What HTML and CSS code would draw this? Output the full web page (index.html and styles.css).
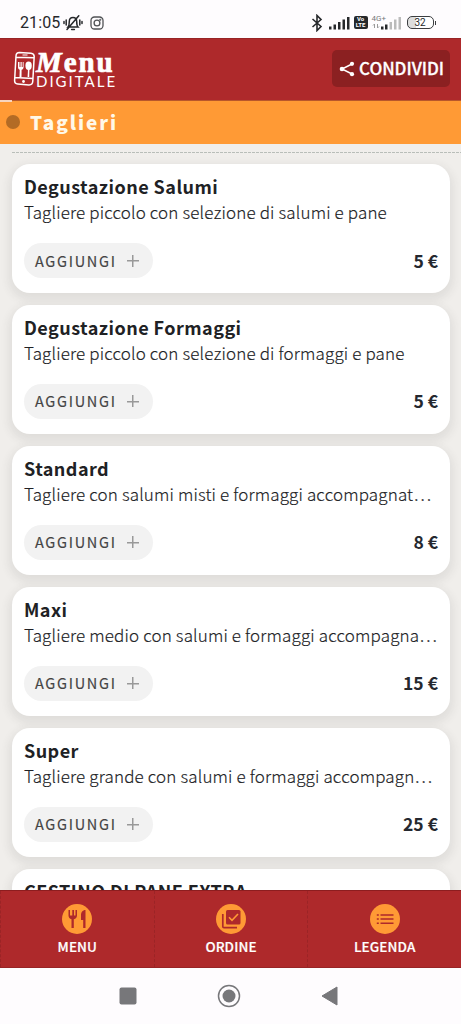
FILE: index.html
```html
<!DOCTYPE html>
<html lang="it">
<head>
<meta charset="utf-8">
<title>Menu Digitale</title>
<link rel="stylesheet" href="styles.css">
</head>
<body>
<div class="phone">
  <div class="status">
    <span class="clock">21:05</span>
    <svg class="bell" width="20" height="18" viewBox="0 0 20 18" fill="none" stroke="#26282b" stroke-width="1.5" stroke-linecap="round"><path d="M5 13h10c-1.300-1.300-1.300-2.500-1.300-5.500 0-2.200-1.500-4-3.700-4S6.300 5.300 6.300 7.500c0 3 0 4.200-1.300 5.500zM8.600 15.600h2.800M15.800 1.800 4 15.500M3.200 6v5M16.800 6v5M1 7.500v2M19 7.500v2"/></svg>
    <svg class="insta" width="14" height="14" viewBox="0 0 14 14" fill="none" stroke="#505255" stroke-width="1.300"><rect x="1" y="1" width="12" height="12" rx="3.500"/><circle cx="7" cy="7" r="2.900"/><circle cx="10.300" cy="3.700" r=".4"/></svg>
    <span class="grow"></span>
    <svg class="bt" width="12" height="18" viewBox="0 0 12 18" fill="none" stroke="#26282b" stroke-width="1.600"><path d="m1.500 5 8.500 7.500L6 16.500v-15L10 5.500 1.500 13"/></svg>
    <svg class="signal" width="21" height="14" viewBox="0 0 21 14" fill="#26282b"><rect y="10.500" width="2.500" height="3"/><rect x="4.500" y="8.500" width="2.500" height="5"/><rect x="9" y="6" width="2.500" height="7.500"/><rect x="13.500" y="3.500" width="2.500" height="10"/><rect x="18" y="1" width="2.500" height="12.500"/></svg>
    <span class="volte"><span>Vo</span><span>LTE</span></span>
    <span class="net">
      <span class="gen">4G+</span>
      <svg width="29" height="14" viewBox="0 0 29 14"><path d="M2.500 12V8L1 9.500M5.500 8v4L7 10.500" fill="none" stroke="#999" /><g fill="#26282b"><rect x="9" y="10.500" width="2.500" height="3"/><rect x="13" y="8.500" width="2.500" height="5"/></g><g fill="#bbb"><rect x="17.500" y="6" width="2.500" height="7.500"/><rect x="22" y="3.500" width="2.500" height="10"/><rect x="26.500" y="1" width="2.500" height="12.500"/></g></svg>
    </span>
    <span class="battery">32</span><span class="cap"></span>
  </div>

  <header class="header">
    <svg class="logo-icon" width="24" height="36" viewBox="0 0 24 36"><g fill="none" stroke="#fff" stroke-width="1.500"><path d="M6.500 1.500 18 2.200c2 .2 3.200 1.300 3.200 3.300L19.800 30c-.1 2.500-1.400 4-4 3.900L4.800 33c-2-.2-3.300-1.300-3.200-3.500L3 5c.1-2.200 1.400-3.500 3.500-3.500zM2.600 6.300l18.400.4M2 26.500l18 1"/></g><path d="M9.500 3.500h5v1h-5zM5 11v5c0 1.800 1 2.600 1.700 2.800L6.500 26h2l.1-7.200c1.300-.4 2-1.300 2-2.800v-5H9.700v5h-1v-5H7.500v5h-1v-5z" fill="#fff"/><ellipse cx="15.600" cy="14.800" rx="3.200" ry="4.200" fill="#fff"/><path d="M15 18h1.400l-.2 8h-1.600z" fill="#fff"/><circle cx="10.500" cy="30.500" r="1.400" fill="#fff"/></svg>
    <div class="wordmark"><span class="menu-word"><i>M</i>enu</span><span class="digital-word">DIGITALE</span></div>
    <button class="share"><svg width="16" height="16" viewBox="0 0 16 16"><path d="M13 3 3 8l10 5" fill="none" stroke="#fff" stroke-width="1.500"/><g fill="#fff"><circle cx="13" cy="2.800" r="2.100"/><circle cx="3" cy="8" r="2.300"/><circle cx="13" cy="13.200" r="2.100"/></g></svg><span>CONDIVIDI</span></button>
  </header>
  <div class="category"><span class="dot"></span><h1>Taglieri</h1></div>

  <main class="list">
    <article class="card"><h2>Degustazione Salumi</h2><p>Tagliere piccolo con selezione di salumi e pane</p><div class="row"><button class="add"><span>AGGIUNGI</span><i class="plus"></i></button><b class="price">5 €</b></div></article>
    <article class="card"><h2>Degustazione Formaggi</h2><p>Tagliere piccolo con selezione di formaggi e pane</p><div class="row"><button class="add"><span>AGGIUNGI</span><i class="plus"></i></button><b class="price">5 €</b></div></article>
    <article class="card"><h2>Standard</h2><p>Tagliere con salumi misti e formaggi accompagnat…</p><div class="row"><button class="add"><span>AGGIUNGI</span><i class="plus"></i></button><b class="price">8 €</b></div></article>
    <article class="card"><h2>Maxi</h2><p>Tagliere medio con salumi e formaggi accompagna…</p><div class="row"><button class="add"><span>AGGIUNGI</span><i class="plus"></i></button><b class="price">15 €</b></div></article>
    <article class="card"><h2>Super</h2><p>Tagliere grande con salumi e formaggi accompagn…</p><div class="row"><button class="add"><span>AGGIUNGI</span><i class="plus"></i></button><b class="price">25 €</b></div></article>
    <article class="card"><h2>CESTINO DI PANE EXTRA</h2></article>
  </main>

  <nav class="tabs">
    <a class="tab"><svg width="30" height="30" viewBox="0 0 30 30"><circle cx="15" cy="15" r="15" fill="#ff9a35"/><path d="M6.500 6v5.500c0 2 1.300 3.300 3 3.700V24h2.300v-8.800c2-.4 3.200-1.700 3.200-3.700V6h-1.500v5.500H12V6h-1.700v5.500H8V6zM23.500 6c-3 0-4.500 2.500-4.500 5v5h2.200v8h2.300z" fill="#ae292b"/></svg><span>MENU</span></a>
    <a class="tab"><svg width="30" height="30" viewBox="0 0 30 30"><circle cx="15" cy="15" r="15" fill="#ff9a35"/><rect x="10" y="6" width="14.500" height="14.500" rx="1.500" fill="#ae292b"/><path d="M6.800 10v12.500c0 .8.400 1.200 1.200 1.200h13" fill="none" stroke="#ae292b" stroke-width="1.700"/><path d="m13 13.300 3 3 6-6.300" fill="none" stroke="#ff9a35" stroke-width="1.600"/></svg><span>ORDINE</span></a>
    <a class="tab"><svg width="30" height="30" viewBox="0 0 30 30"><circle cx="15" cy="15" r="15" fill="#ff9a35"/><path d="M10.500 11h13M10.500 15h13M10.500 19.200h13M6.800 11h2M6.800 15h2M6.800 19.200h2" stroke="#ae292b" stroke-width="1.600"/></svg><span>LEGENDA</span></a>
  </nav>
  <div class="system">
    <svg width="18" height="18"><rect x=".5" y=".5" width="17" height="17" rx="2" fill="#77777a"/></svg>
    <svg width="24" height="24" fill="none"><circle cx="12" cy="12" r="10.500" stroke="#77777a" stroke-width="1.500"/><circle cx="12" cy="12" r="6.500" fill="#77777a"/></svg>
    <svg width="18" height="20"><path d="M16 1v18L1 10z" fill="#77777a" stroke="#77777a" stroke-linejoin="round"/></svg>
  </div>
</div>
</body>
</html>
```
FILE: styles.css
```css
* { box-sizing: border-box; }
body { margin: 0; background: #fefcfe; font-family: "Noto Sans CJK SC", "Open Sans", sans-serif; }
h1, h2, p { margin: 0; }
button { border: 0; font-family: inherit; margin: 0; padding: 0; }
.phone { width: 461px; height: 1024px; display: flex; flex-direction: column; overflow: hidden; background: #f0eeeb; }

.status { height: 38px; flex: none; display: flex; align-items: center; background: #fefcfe; padding: 7px 25px 0 20px; color: #26282b; }
.clock { font: 16px/20px Roboto, sans-serif; letter-spacing: .1px; width: 43px; }
.insta { margin-left: 7px; }
.grow { flex: 1; }
.bt { margin-right: 6px; }
.volte { width: 14px; height: 13px; margin-left: 4px; border-radius: 2px; background: #26282b; color: #fff; font: bold 6px/6px Roboto, sans-serif; display: flex; flex-direction: column; align-items: center; }
.net { display: flex; height: 14px; width: 29px; margin: 0 6px 0 4px; position: relative; }
.gen { position: absolute; left: 0; top: -2px; font: 8px/9px Roboto, sans-serif; color: #77797c; }
.battery { width: 27px; height: 12.500px; border: 1.500px solid #3b3d40; border-radius: 5px; background: linear-gradient(90deg, #ddd 32%, #fff 32%); font: 10px/11px Roboto, sans-serif; text-align: center; }
.cap { width: 1.500px; height: 4px; background: #3b3d40; margin-left: 1px; }

.header { height: 62px; flex: none; background: #ae292b; border-top: 1px solid #982426; display: flex; padding: 11px 11px 0 13px; color: #fff; }
.logo-icon { margin-top: 1px; }
.wordmark { display: flex; flex-direction: column; margin-left: -1px; }
.menu-word { font: bold 29px/24px "Liberation Serif", serif; letter-spacing: 1.900px; height: 23px; color: #fff; -webkit-text-stroke: .7px #fff; }
.digital-word { font: 400 15px/15px Lato, sans-serif; letter-spacing: 2px; margin-top: .5px; }
.share { margin-left: auto; width: 118px; height: 37px; border-radius: 5px; background: #8b2021; color: #fff; display: flex; align-items: center; justify-content: center; gap: 4px; font-size: 17px; font-weight: 500; line-height: 24px; }
.share svg { margin-left: 1px; }
.share span { margin-top: -2px; letter-spacing: -.05px; -webkit-text-stroke: .3px #fff; }

.category { height: 44px; flex: none; background: linear-gradient(#f7d5bf, #f7d5bf) 0 0 / 12px 2px no-repeat, linear-gradient(#b8572b, #b8572b) 0 0 / 100% 1px no-repeat, #ff9a35; display: flex; align-items: center; padding-left: 6px; }
.dot { width: 14px; height: 14px; border-radius: 50%; background: #b36b25; margin-top: -1px; }
.category h1 { margin-left: 10px; font-size: 19px; line-height: 30px; font-weight: 900; letter-spacing: 1.900px; color: #fff8e8; }

.list { flex: 1; min-height: 0; overflow: hidden; margin-top: 8px; padding: 0 11px 0 12px; display: flex; flex-direction: column; gap: 11.600px; }
.list::before { content: ""; flex: none; height: 1px; margin: 0 -11px -.600px 0; background: repeating-linear-gradient(90deg, #b9beb9 0 3px, transparent 3px 4px); }
.card { flex: none; height: 129.400px; border-radius: 18px; background: #fff; padding: 9px 12px 0; box-shadow: 0 4px 10px 3px rgba(60, 55, 50, .09); }
.card h2 { font-size: 18px; line-height: 26px; font-weight: 700; letter-spacing: .460px; color: #202124; white-space: nowrap; }
.card p { font-size: 17px; line-height: 26px; font-weight: 300; letter-spacing: .150px; color: #202124; white-space: nowrap; -webkit-text-stroke: .15px #202124; }
.row { display: flex; align-items: center; justify-content: space-between; margin-top: 18px; height: 35px; }
.add { width: 129px; height: 35px; border-radius: 18px; background: #f2f2f2; display: flex; align-items: center; padding-left: 11px; font-size: 14.500px; line-height: 20px; font-weight: 400; letter-spacing: 1.700px; color: #444; -webkit-text-stroke: .15px #444; }
.plus { width: 12px; height: 12px; margin-left: auto; margin-right: 14px; background: linear-gradient(#999, #999) center / 12px 1.500px no-repeat, linear-gradient(#999, #999) center / 1.500px 12px no-repeat; }
.price { font-size: 17.500px; line-height: 24px; color: #25282f; }

.tabs { height: 78px; flex: none; display: flex; background: #ae292b; border-top: 1px solid #8d1d1f; border-bottom: 1px solid #982426; color: #fff; }
.tab { flex: 1; display: flex; flex-direction: column; align-items: center; padding-top: 13px; border-left: 1px dashed #9b2426; font-size: 13.500px; line-height: 20px; font-weight: 500; letter-spacing: .1px; -webkit-text-stroke: .2px #fff; }
.tab span { margin-top: 2px; }
.system { height: 56px; flex: none; background: #fefcfe; display: flex; align-items: center; justify-content: space-between; padding: 0 122px 0 119px; }
```
